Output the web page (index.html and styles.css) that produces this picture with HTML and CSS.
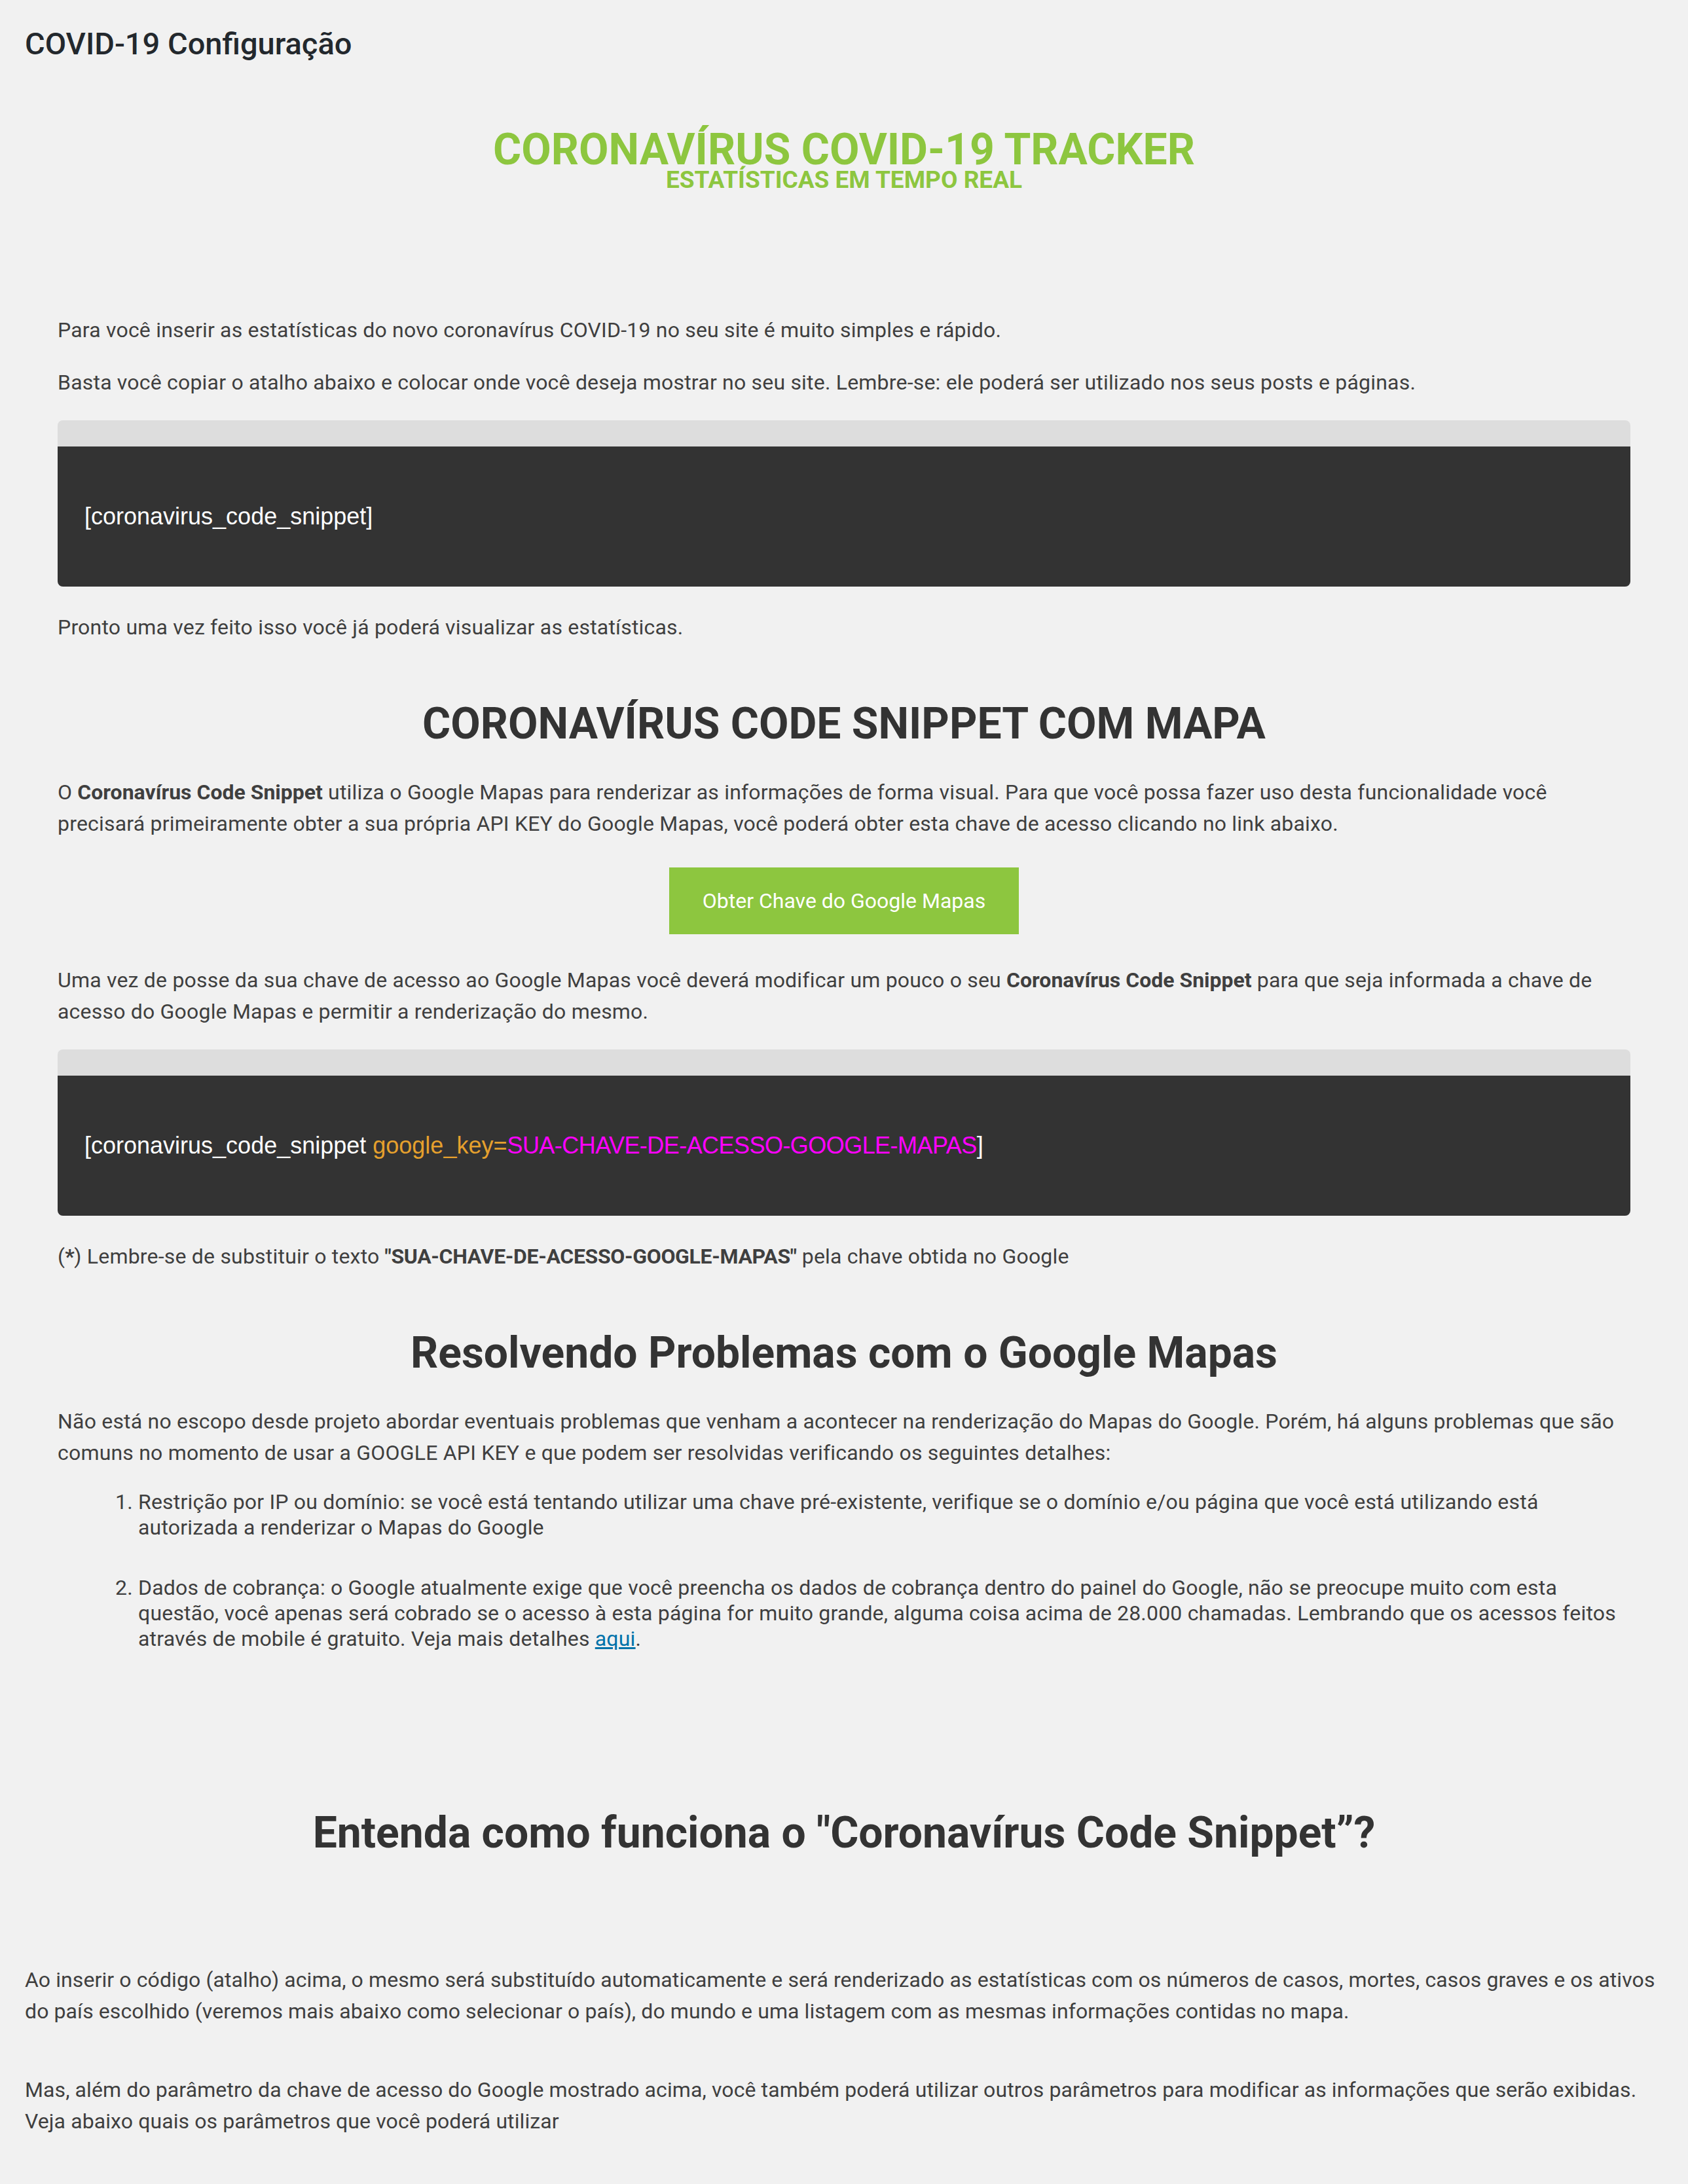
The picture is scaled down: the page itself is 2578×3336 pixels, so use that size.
FILE: index.html
```html
<!DOCTYPE html>
<html lang="pt-BR">
<head>
<meta charset="utf-8">
<title>COVID-19 Configuração</title>
<link rel="stylesheet" href="styles.css">
</head>
<body>
<div class="wrap">
  <h1 class="page-title">COVID-19 Configuração</h1>

  <header class="hero">
    <h2 class="hero-title">CORONAVÍRUS COVID-19 TRACKER</h2>
    <h3 class="hero-sub">ESTATÍSTICAS EM TEMPO REAL</h3>
  </header>

  <section class="content">
    <p class="first">Para você inserir as estatísticas do novo coronavírus COVID-19 no seu site é muito simples e rápido.</p>
    <p>Basta você copiar o atalho abaixo e colocar onde você deseja mostrar no seu site. Lembre-se: ele poderá ser utilizado nos seus posts e páginas.</p>

    <div class="code-box">
      <div class="code-bar"></div>
      <div class="code-body">[coronavirus_code_snippet]</div>
    </div>

    <p>Pronto uma vez feito isso você já poderá visualizar as estatísticas.</p>

    <h2 class="section-title upper">CORONAVÍRUS CODE SNIPPET COM MAPA</h2>
    <p>O <strong>Coronavírus Code Snippet</strong> utiliza o Google Mapas para renderizar as informações de forma visual. Para que você possa fazer uso desta funcionalidade você precisará primeiramente obter a sua própria API KEY do Google Mapas, você poderá obter esta chave de acesso clicando no link abaixo.</p>

    <div class="btn-row">
      <a class="btn" href="#">Obter Chave do Google Mapas</a>
    </div>

    <p class="after-btn">Uma vez de posse da sua chave de acesso ao Google Mapas você deverá modificar um pouco o seu <strong>Coronavírus Code Snippet</strong> para que seja informada a chave de acesso do Google Mapas e permitir a renderização do mesmo.</p>

    <div class="code-box">
      <div class="code-bar"></div>
      <div class="code-body">[coronavirus_code_snippet <span class="attr">google_key=</span><span class="val">SUA-CHAVE-DE-ACESSO-GOOGLE-MAPAS</span>]</div>
    </div>

    <p class="note">(<strong>*</strong>) Lembre-se de substituir o texto <strong>"SUA-CHAVE-DE-ACESSO-GOOGLE-MAPAS"</strong> pela chave obtida no Google</p>

    <h2 class="section-title">Resolvendo Problemas com o Google Mapas</h2>
    <p>Não está no escopo desde projeto abordar eventuais problemas que venham a acontecer na renderização do Mapas do Google. Porém, há alguns problemas que são comuns no momento de usar a GOOGLE API KEY e que podem ser resolvidas verificando os seguintes detalhes:</p>

    <ol class="steps">
      <li>Restrição por IP ou domínio: se você está tentando utilizar uma chave pré-existente, verifique se o domínio e/ou página que você está utilizando está autorizada a renderizar o Mapas do Google</li>
      <li>Dados de cobrança: o Google atualmente exige que você preencha os dados de cobrança dentro do painel do Google, não se preocupe muito com esta questão, você apenas será cobrado se o acesso à esta página for muito grande, alguma coisa acima de 28.000 chamadas. Lembrando que os acessos feitos através de mobile é gratuito. Veja mais detalhes <a href="#">aqui</a>.</li>
    </ol>
  </section>

  <section class="how">
    <h2 class="section-title how-title">Entenda como funciona o "Coronavírus Code Snippet”?</h2>
    <p class="how-p1">Ao inserir o código (atalho) acima, o mesmo será substituído automaticamente e será renderizado as estatísticas com os números de casos, mortes, casos graves e os ativos do país escolhido (veremos mais abaixo como selecionar o país), do mundo e uma listagem com as mesmas informações contidas no mapa.</p>
    <p class="how-p2">Mas, além do parâmetro da chave de acesso do Google mostrado acima, você também poderá utilizar outros parâmetros para modificar as informações que serão exibidas. Veja abaixo quais os parâmetros que você poderá utilizar</p>
  </section>
</div>
</body>
</html>
```

FILE: styles.css
```css
html, body {
  margin: 0;
  padding: 0;
}
body {
  background: #f1f1f1;
  color: #3f3f3f;
  font-family: Roboto, "Noto Sans", "Liberation Sans", sans-serif;
  font-size: 32px;
  line-height: 48px;
}
.wrap {
  padding: 0 38px 80px 38px;
}
.page-title {
  margin: 0;
  padding-top: 37px;
  font-size: 47px;
  line-height: 60px;
  font-weight: 500;
  color: #23282d;
}
.hero {
  margin-top: 103px;
  display: flex;
  flex-direction: column;
  align-items: center;
  text-align: center;
}
.hero-title {
  margin: 0;
  font-size: 66px;
  line-height: 57px;
  font-weight: 700;
  color: #8dc63f;
}
.hero-sub {
  margin: 0;
  font-size: 37px;
  line-height: 36px;
  font-weight: 700;
  color: #8dc63f;
}
.content {
  margin: 0 50px;
}
p {
  margin: 32px 0 0 0;
  letter-spacing: 0.2px;
}
.content .first {
  margin-top: 187px;
}
strong {
  font-weight: 700;
  letter-spacing: 0;
}
.note strong {
  letter-spacing: -0.35px;
}
.code-box {
  margin: 34px 0 38px 0;
  border-radius: 8px;
  overflow: hidden;
}
.code-box + p {
  margin-top: 0;
}
.code-bar {
  height: 40px;
  background: #dddddd;
}
.code-body {
  height: 214px;
  background: #333333;
  color: #ffffff;
  font-family: "Liberation Sans", Arial, sans-serif;
  font-size: 36px;
  display: flex;
  align-items: center;
  padding-left: 41px;
  white-space: pre;
}
.attr {
  color: #e5a02d;
}
.val {
  color: #ff00ff;
  letter-spacing: -0.55px;
}
.section-title {
  margin: 85px 0 42px 0;
  font-size: 66px;
  line-height: 77px;
  font-weight: 700;
  color: #333;
  text-align: center;
}
.section-title + p {
  margin-top: 0;
}
.btn-row {
  display: flex;
  justify-content: center;
  margin-top: 43px;
}
.btn {
  display: block;
  background: #8dc63f;
  color: #fff;
  text-decoration: none;
  font-size: 32px;
  line-height: 102px;
  height: 102px;
  padding: 0 51px;
}
.content .after-btn {
  margin-top: 46px;
}
.steps {
  margin: 32px 0 0 0;
  padding-left: 123px;
  line-height: 39px;
  letter-spacing: 0.2px;
}
.steps li {
  margin-bottom: 53px;
}
.steps li:last-child {
  margin-bottom: 0;
}
.steps a {
  color: #0073aa;
  text-decoration: underline;
}
.how-title {
  margin-top: 238px;
  margin-bottom: 162px;
}
.how p {
  letter-spacing: 0.1px;
}
.how .how-p1 {
  margin-top: 0;
}
.how .how-p2 {
  margin-top: 72px;
}
```
